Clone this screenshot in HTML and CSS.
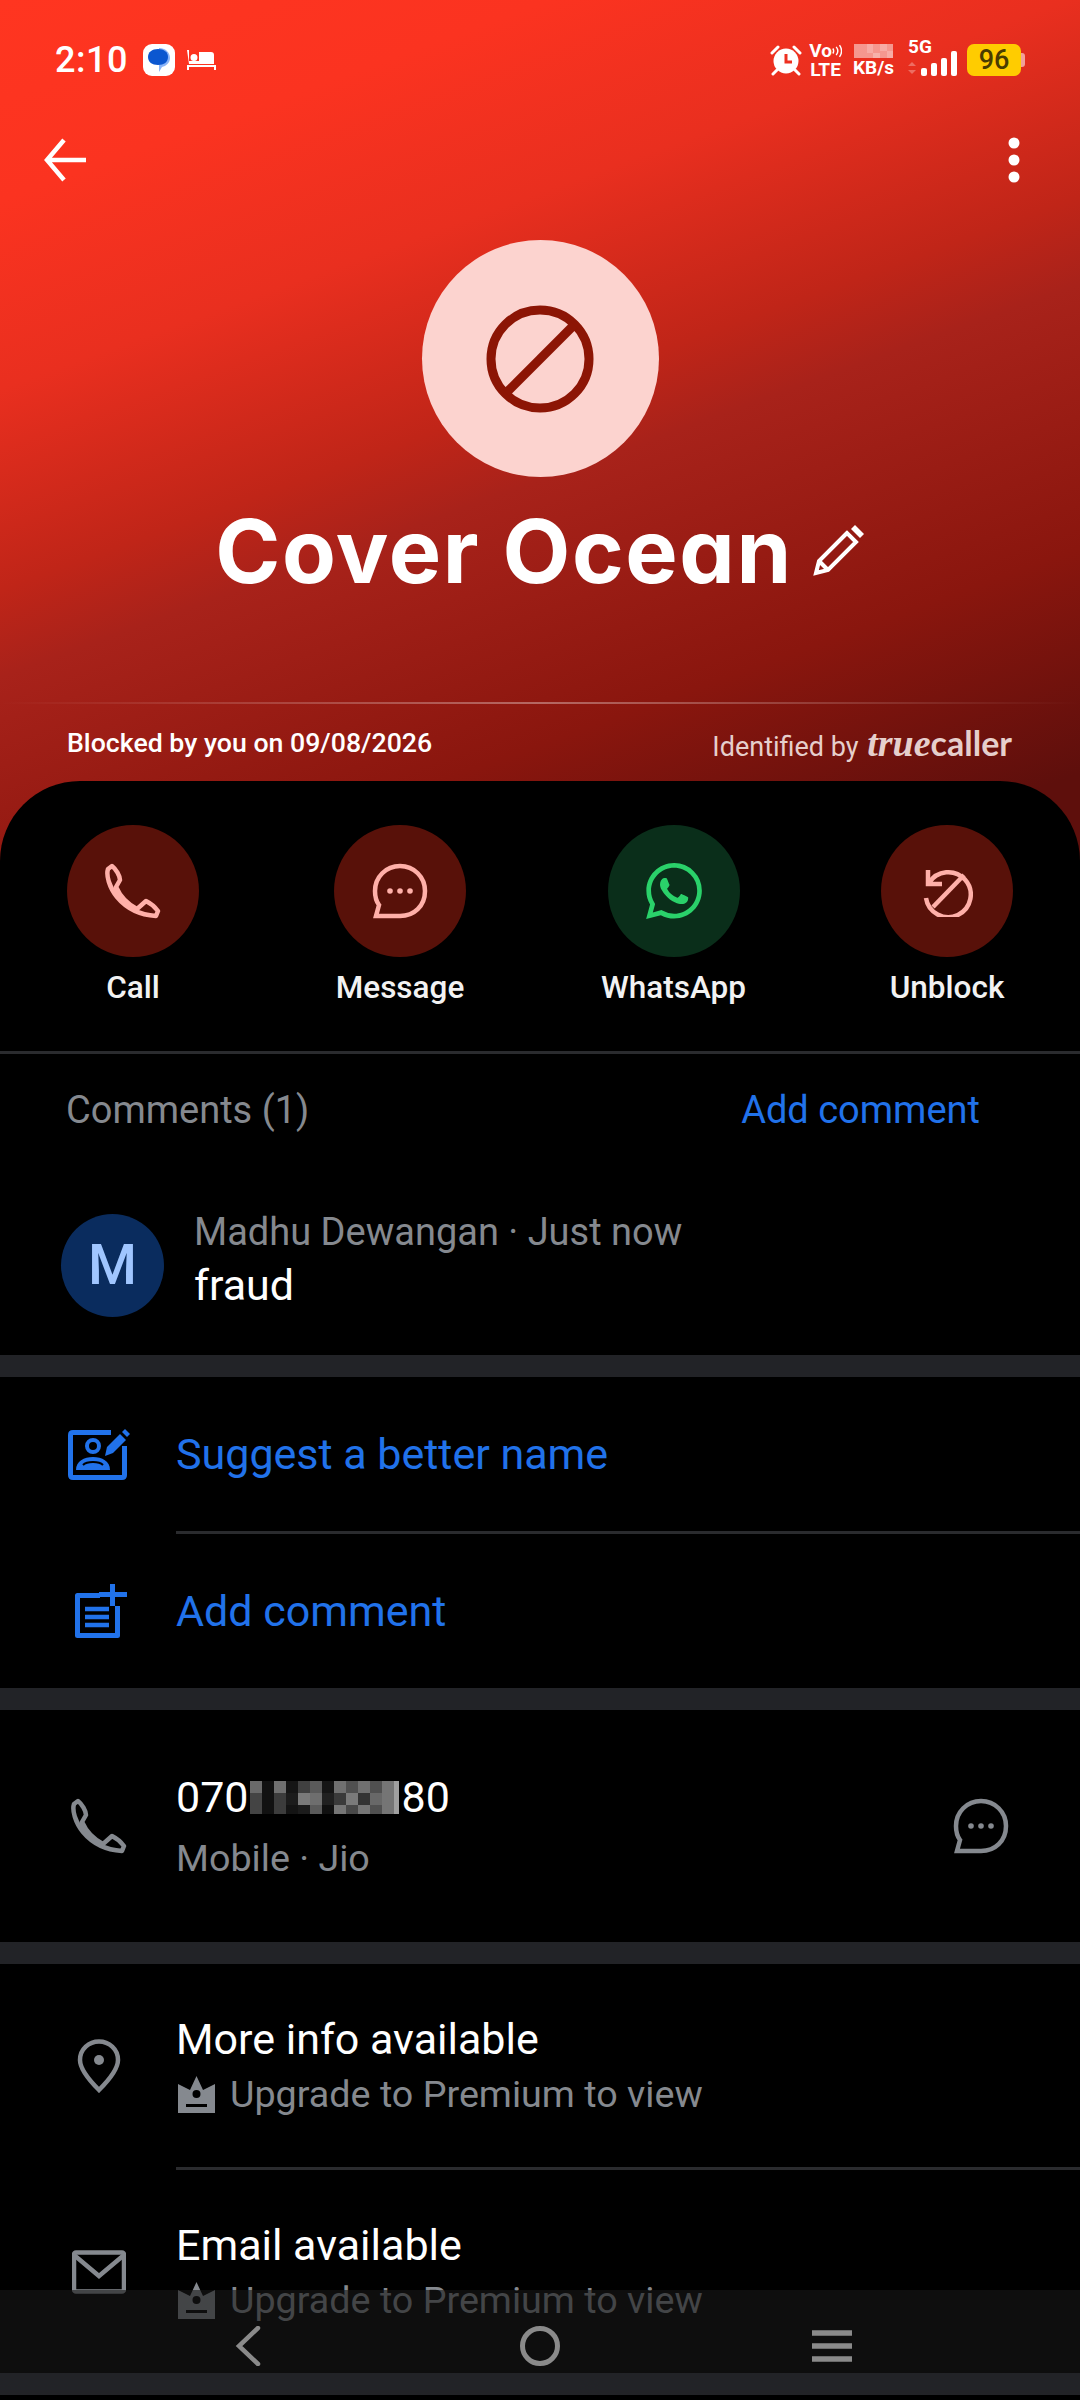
FILE: index.html

```html
<!DOCTYPE html>
<html lang="en">
<head>
  <meta charset="UTF-8" />
  <meta name="viewport" content="width=device-width, initial-scale=1.0"/>
  <title>Cover Ocean</title>
  <link rel="stylesheet" href="styles.css">
</head>
<body>
<div class="screen">

  <!-- Red header -->
  <header class="hero">
    <div class="status">
      <span class="time">2:10</span>
      <span class="app-badge">
        <svg width="22" height="24" viewBox="0 0 22 24"><path fill="#8ab4f8" d="M11 0c6 0 11 4 11 10 0 5-4 8-8 9l-3 5V0z"/><path fill="#0b57d0" d="M10 1C4 1 0 4 0 9s4 8 10 8c6 0 10-3 10-8s-4-8-10-8z"/></svg>
      </span>
      <svg class="bed" width="29" height="20" viewBox="0 0 29 20"><path fill="#fff" d="M0 0h2v14h25V5c0-2-1-3-3-3H12v9H2v3zM7 11a3.500 3.500 0 1 0 0-7 3.500 3.500 0 0 0 0 7zM0 15h29v5h-2v-3H2v3H0z"/></svg>

      <div class="status-right">
        <svg class="alarm" width="32" height="32" viewBox="0 0 32 32">
          <circle cx="16" cy="17" r="12.500" fill="#fff"/>
          <path d="M16 10v8h6" fill="none" stroke="#ee3020" stroke-width="3"/>
          <path d="M2 9l6-6M30 9l-6-6M7 26l-4 4M25 26l4 4" stroke="#fff" stroke-width="3" stroke-linecap="round"/>
        </svg>
        <div class="st-stack volte">
          <span class="vo">Vo<svg width="10" height="14" viewBox="0 0 12 14"><path d="M1 4q2 3 0 6M5 2q4 5 0 10M9 0q5 7 0 14" fill="none" stroke="#fff" stroke-width="1.700"/></svg></span>
          <span>LTE</span>
        </div>
        <div class="st-stack speed">
          <svg width="39" height="14" viewBox="0 0 39 14">
            <rect width="39" height="14" fill="#fff" fill-opacity=".5"/>
            <rect x="13" width="6" height="9" fill="#fff" fill-opacity=".2"/>
            <rect x="19" y="9" width="7" height="5" fill="#fff" fill-opacity=".25"/>
            <rect x="26" width="7" height="7" fill="#fff" fill-opacity=".2"/>
            <rect x="33" y="7" width="6" height="7" fill="#fff" fill-opacity=".2"/>
          </svg>
          <span>KB/s</span>
        </div>
        <div class="net">
          <span class="five-g">5G</span>
          <svg width="50" height="38" viewBox="0 0 50 38" class="bars">
            <path d="M4 21l4 4H0zM4 33l4-4H0z" fill="#fff" fill-opacity=".3"/>
            <rect x="13" y="27" width="6" height="8" rx="2" fill="#fff"/>
            <rect x="23" y="22" width="6" height="13" rx="2" fill="#fff"/>
            <rect x="33" y="17" width="6" height="18" rx="2" fill="#fff"/>
            <rect x="43" y="10" width="6" height="25" rx="2" fill="#fff"/>
          </svg>
        </div>
        <div class="battery">96</div>
        <div class="battery-nub"></div>
      </div>
    </div>

    <div class="toolbar">
      <svg width="44" height="44" viewBox="0 0 44 44"><path d="M42 22H4M20 2L3 22l17 20" fill="none" stroke="#fff" stroke-width="4.500"/></svg>
      <svg width="12" height="46" viewBox="0 0 12 46"><circle cx="6" cy="6" r="5.500" fill="#fff"/><circle cx="6" cy="23" r="5.500" fill="#fff"/><circle cx="6" cy="40" r="5.500" fill="#fff"/></svg>
    </div>

    <div class="avatar">
      <svg width="108" height="108" viewBox="0 0 108 108" class="block-icon">
        <circle cx="54" cy="54" r="49" fill="none" stroke="#8c1505" stroke-width="9"/>
        <path d="M88 20L20 88" stroke="#8c1505" stroke-width="9"/>
      </svg>
    </div>

    <div class="name-row">
      <h1>Cover Ocean</h1>
      <svg width="52" height="52" viewBox="0 0 52 52" class="pencil">
        <path d="M34 9L6 37l-3 12 12-3 28-28z" fill="none" stroke="#fff" stroke-width="4"/>
        <path d="M6 37l9 9" stroke="#fff" stroke-width="4"/>
        <path d="M38 5l4-4 9 9-4 4z" fill="#fff"/>
      </svg>
    </div>

    <div class="hero-line"></div>
    <div class="hero-meta">
      <span class="blocked">Blocked by you on 09/08/2026</span>
      <span class="identified">Identified by <span class="tc"><i>true</i>caller</span></span>
    </div>
  </header>

  <!-- Black sheet -->
  <main class="sheet">
    <div class="actions">
      <div class="action">
        <div class="circle">
          <svg width="56" height="56" viewBox="0 0 56 56" class="ico-red"><use href="#phone"/></svg>
        </div>
        <span>Call</span>
      </div>
      <div class="action">
        <div class="circle">
          <svg width="56" height="56" viewBox="0 0 56 56" class="ico-red"><use href="#bubble"/></svg>
        </div>
        <span>Message</span>
      </div>
      <div class="action">
        <div class="circle green">
          <svg width="56" height="56" viewBox="0 0 24 24"><path fill="#2ad16a" d="M17.472 14.382c-.297-.149-1.758-.867-2.03-.967-.273-.099-.471-.148-.67.15-.197.297-.767.966-.94 1.164-.173.199-.347.223-.644.075-.297-.15-1.255-.463-2.39-1.475-.883-.788-1.48-1.761-1.653-2.059-.173-.297-.018-.458.13-.606.134-.133.298-.347.446-.52.149-.174.198-.298.298-.497.099-.198.05-.371-.025-.52-.075-.149-.669-1.612-.916-2.207-.242-.579-.487-.5-.669-.51-.173-.008-.371-.01-.57-.01-.198 0-.52.074-.792.372-.272.297-1.04 1.016-1.04 2.479 0 1.462 1.065 2.875 1.213 3.074.149.198 2.096 3.2 5.077 4.487.709.306 1.262.489 1.694.625.712.227 1.36.195 1.871.118.571-.085 1.758-.719 2.006-1.413.248-.694.248-1.289.173-1.413-.074-.124-.272-.198-.57-.347m-5.421 7.403h-.004a9.87 9.87 0 01-5.031-1.378l-.361-.214-3.741.982.998-3.648-.235-.374a9.86 9.86 0 01-1.51-5.26c.001-5.45 4.436-9.884 9.888-9.884 2.64 0 5.122 1.03 6.988 2.898a9.825 9.825 0 012.893 6.994c-.003 5.45-4.437 9.884-9.885 9.884m8.413-18.297A11.815 11.815 0 0012.05 0C5.495 0 .16 5.335.157 11.892c0 2.096.547 4.142 1.588 5.945L.057 24l6.305-1.654a11.882 11.882 0 005.683 1.448h.005c6.554 0 11.89-5.335 11.893-11.893a11.821 11.821 0 00-3.48-8.413z"/></svg>
        </div>
        <span>WhatsApp</span>
      </div>
      <div class="action">
        <div class="circle">
          <svg width="52" height="52" viewBox="0 0 52 52" fill="none" stroke="#ffb0a9" stroke-width="4.500">
            <path d="M7 5v14h14"/>
            <path d="M8 18A22.500 22.500 0 1 1 5 33"/>
            <path d="M43 10L12 42"/>
          </svg>
        </div>
        <span>Unblock</span>
      </div>
    </div>

    <div class="comments-head">
      <span class="muted">Comments (1)</span>
      <span class="blue">Add comment</span>
    </div>

    <div class="comment">
      <div class="comment-avatar">M</div>
      <div>
        <div class="comment-by">Madhu Dewangan · Just now</div>
        <div class="comment-text">fraud</div>
      </div>
    </div>

    <div class="gap"></div>

    <div class="row">
      <div class="row-icon">
        <svg width="62" height="52" viewBox="0 0 62 52">
          <path d="M43 4.500H5Q2.500 4.500 2.500 7v40q0 2.500 2.500 2.500h49q2.500 0 2.500-2.500V18" fill="none" stroke="#2172ea" stroke-width="5"/>
          <circle cx="25" cy="18" r="6" fill="none" stroke="#2172ea" stroke-width="4"/>
          <path d="M8 42c0-9 8-13 17-13s17 4 17 13z" fill="#2172ea"/>
          <path d="M15 37c4-4 16-4 20 0" fill="none" stroke="#000" stroke-width="2"/>
          <path d="M37 28l2-9L52 6l6 6-13 13z" fill="#2172ea"/>
          <path d="M54 4l3-3 5 5-3 3z" fill="#2172ea"/>
        </svg>
      </div>
      <span class="row-title blue">Suggest a better name</span>
    </div>
    <div class="inset-line"></div>
    <div class="row">
      <div class="row-icon">
        <svg width="56" height="54" viewBox="-3 0 56 54">
          <path d="M26 11.500H3.500v40h40V22" fill="none" stroke="#2172ea" stroke-width="5" stroke-linejoin="round"/>
          <path d="M38.500 0v22M25 10.500h28" stroke="#2172ea" stroke-width="5" fill="none"/>
          <path d="M11 25h24M11 33h24M11 41h24" stroke="#2172ea" stroke-width="4.500"/>
        </svg>
      </div>
      <span class="row-title blue">Add comment</span>
    </div>

    <div class="gap"></div>

    <div class="row row-phone">
      <div class="row-icon">
        <svg width="56" height="56" viewBox="0 0 56 56" class="ico-grey"><use href="#phone"/></svg>
      </div>
      <div class="row-text">
        <div class="row-title number">070<svg class="redact" width="149" height="33" viewBox="0 0 149 33">
          <path fill="#6a6a6a" d="M0 0h12v12H0z"/><path fill="#111" d="M12 0h12v33H12z"/><path fill="#707070" d="M24 0h12v12H24z"/><path fill="#151515" d="M36 0h12v12H36z"/><path fill="#404040" d="M48 0h12v12H48z"/><path fill="#5a5a5a" d="M60 0h12v12H60z"/><path fill="#151515" d="M72 0h12v12H72z"/><path fill="#707070" d="M84 0h12v12H84z"/><path fill="#505050" d="M96 0h12v12H96z"/><path fill="#707070" d="M108 0h12v12h-12z"/><path fill="#505050" d="M120 0h12v12h-12z"/><path fill="#757575" d="M132 0h12v33h-12z"/><path fill="#a0a0a0" d="M144 0h5v33h-5z"/>
          <path fill="#444" d="M0 12h12v21H0z"/><path fill="#3c3c3c" d="M24 12h12v21H24z"/><path fill="#1c1c1c" d="M36 12h12v12H36z"/><path fill="#7a7a7a" d="M48 12h12v12H48z"/><path fill="#6e6e6e" d="M60 12h12v12H60z"/><path fill="#202020" d="M72 12h12v12H72z"/><path fill="#3a3a3a" d="M84 12h12v12H84z"/><path fill="#7a7a7a" d="M96 12h12v12H96z"/><path fill="#333" d="M108 12h12v12h-12z"/><path fill="#686868" d="M120 12h12v12h-12z"/>
          <path fill="#141414" d="M36 24h12v9H36z"/><path fill="#1c1c1c" d="M48 24h12v9H48z"/><path fill="#5a5a5a" d="M60 24h12v9H60z"/><path fill="#101010" d="M72 24h12v9H72z"/><path fill="#757575" d="M84 24h12v9H84z"/><path fill="#484848" d="M96 24h12v9H96z"/><path fill="#757575" d="M108 24h12v9h-12z"/><path fill="#505050" d="M120 24h12v9h-12z"/>
        </svg>80</div>
        <div class="row-sub">Mobile · Jio</div>
      </div>
      <svg width="56" height="56" viewBox="0 0 56 56" class="ico-grey row-end"><use href="#bubble"/></svg>
    </div>

    <div class="gap"></div>

    <div class="row row-info">
      <div class="row-icon">
        <svg width="44" height="54" viewBox="0 0 44 54">
          <path d="M22 2.500c10 0 19 7.500 19 18.500 0 10-11 22-19 30C14 43 3 31 3 21 3 10 12 2.500 22 2.500z" fill="none" stroke="#85898f" stroke-width="4.500"/>
          <circle cx="22" cy="21" r="5" fill="#85898f"/>
        </svg>
      </div>
      <div class="row-text">
        <div class="row-title">More info available</div>
        <div class="row-sub premium"><svg width="37" height="37" viewBox="0 0 37 37"><use href="#crown"/></svg>Upgrade to Premium to view</div>
      </div>
    </div>
    <div class="inset-line"></div>
    <div class="row row-info">
      <div class="row-icon">
        <svg width="54" height="44" viewBox="0 0 54 44">
          <rect x="2" y="2.500" width="50" height="39" rx="2" fill="none" stroke="#85898f" stroke-width="4.500"/>
          <path d="M2 5l25 21L52 5" fill="none" stroke="#85898f" stroke-width="4.500"/>
        </svg>
      </div>
      <div class="row-text">
        <div class="row-title">Email available</div>
        <div class="row-sub premium"><svg width="37" height="37" viewBox="0 0 37 37"><use href="#crown"/></svg>Upgrade to Premium to view</div>
      </div>
    </div>

    <div class="gap"></div>
  </main>

  <!-- Navigation bar, sits over the list -->
  <nav class="navbar">
    <svg width="26" height="40" viewBox="0 0 26 40"><path d="M23 2L4 20l19 18" fill="none" stroke="#8a8a8a" stroke-width="4.500" stroke-linecap="round"/></svg>
    <div class="nav-home"></div>
    <svg width="40" height="32" viewBox="0 0 40 32"><path d="M0 3h40M0 16h40M0 29h40" stroke="#8a8a8a" stroke-width="5.500"/></svg>
  </nav>

  <!-- shared icons -->
  <svg class="defs" width="0" height="0">
    <defs>
      <g id="phone"><path d="M7 3c4 3 8 10 8 14l-4 7c4 9 11 17 21 22l9-8c4 2 9 6 12 10l-2 5C36 52 22 46 12 34 4 24 1 12 3 6z" fill="none" stroke="currentColor" stroke-width="4.500" stroke-linejoin="round"/></g>
      <g id="bubble">
        <path d="M28 3c14 0 25 11 25 25 0 15-11 25-25 25H4l3-11c-3-4-4-9-4-14C3 14 14 3 28 3z" fill="none" stroke="currentColor" stroke-width="4.500"/>
        <circle cx="18" cy="28" r="2.800" fill="currentColor"/><circle cx="28" cy="28" r="2.800" fill="currentColor"/><circle cx="38" cy="28" r="2.800" fill="currentColor"/>
      </g>
      <g id="crown">
        <path d="M18.500 0L25 14l12-6v29H0V8l12 6z" fill="#85898f"/>
        <circle cx="18.500" cy="18" r="4" fill="#000"/>
        <path d="M8 28h21v3H8z" fill="#000"/>
      </g>
    </defs>
  </svg>
</div>
</body>
</html>
```

FILE: styles.css

```css
* {
  box-sizing: border-box;
}
html, body {
  margin: 0;
  padding: 0;
  background: #000;
}
.screen {
  position: relative;
  width: 1080px;
  height: 2400px;
  overflow: hidden;
  background: #000;
  font-family: Roboto, 'Noto Sans', sans-serif;
  color: #fff;
}

/* header */
.hero {
  height: 861px;
  background: linear-gradient(160deg, #ff3520 0%, #fb3320 16%, #e92f1f 31%, #c02518 47%, #a8221a 54%, #8a160e 75%, #5e0f0c 93%);
}
.status {
  display: flex;
  align-items: center;
  height: 120px;
  padding: 0 55px;
}
.time {
  font-size: 36px;
  font-weight: 500;
  letter-spacing: 0.5px;
}
.app-badge {
  display: flex;
  align-items: center;
  justify-content: center;
  width: 32px;
  height: 32px;
  margin-left: 15px;
  background: #fff;
  border-radius: 9px;
}
.bed {
  margin-left: 12px;
}
.status-right {
  display: flex;
  align-items: center;
  margin-left: auto;
}
.st-stack {
  display: flex;
  flex-direction: column;
  align-items: center;
  font-size: 19px;
  font-weight: 700;
  line-height: 19px;
}
.vo {
  display: flex;
  align-items: center;
  height: 19px;
}
.volte {
  width: 27px;
  margin-left: 10px;
}
.speed {
  width: 39px;
  margin-left: 15px;
}
.net {
  position: relative;
  width: 50px;
  height: 38px;
  margin-left: 15px;
}
.five-g {
  position: absolute;
  top: -6px;
  left: 0;
  font-size: 19px;
  font-weight: 700;
}
.battery {
  width: 54px;
  height: 32px;
  margin-left: 9px;
  background: #ffcc00;
  border-radius: 7px;
  color: #4a3c00;
  font-size: 27px;
  font-weight: 500;
  line-height: 32px;
  text-align: center;
}
.battery-nub {
  width: 4px;
  height: 14px;
  background: rgba(255, 255, 255, 0.55);
  border-radius: 0 3px 3px 0;
}
.toolbar {
  display: flex;
  align-items: center;
  justify-content: space-between;
  height: 80px;
  padding: 0 60px 0 44px;
}
.avatar {
  display: flex;
  align-items: center;
  justify-content: center;
  width: 237px;
  height: 237px;
  margin: 40px auto 0;
  background: #fcd3cf;
  border-radius: 50%;
}
.block-icon {
  filter: blur(0.6px);
}
.name-row {
  display: flex;
  align-items: center;
  justify-content: center;
  height: 100px;
  margin-top: 24px;
}
h1 {
  margin: 0;
  font-family: Inter, sans-serif;
  font-feature-settings: "cv11";
  font-size: 88px;
  font-weight: 700;
  letter-spacing: 1.6px;
  line-height: 100px;
}
.pencil {
  margin: 0 0 3px 20px;
}
.hero-line {
  height: 2px;
  margin-top: 101px;
  background: linear-gradient(90deg, transparent, rgba(255, 255, 255, 0.35) 50%, transparent);
}
.hero-meta {
  display: flex;
  align-items: center;
  justify-content: space-between;
  height: 78px;
  padding: 0 68px 0 67px;
}
.blocked {
  font-size: 26.7px;
  font-weight: 500;
}
.identified {
  color: #e6cfcc;
  font-size: 27px;
  font-weight: 400;
}
.tc {
  margin-left: 2px;
  font-family: Lato, sans-serif;
  font-size: 34px;
  font-weight: 700;
}
.tc i {
  font-family: 'Liberation Serif', serif;
  font-size: 38px;
  font-weight: 700;
}

/* sheet */
.sheet {
  margin-top: -80px;
  position: relative;
  background: #000;
  border-radius: 80px 80px 0 0;
}
.actions {
  display: flex;
  justify-content: space-between;
  padding: 44px 67px 43px;
  border-bottom: 3px solid #2a2b2e;
}
.action {
  display: flex;
  flex-direction: column;
  align-items: center;
  min-width: 132px;
  font-size: 31.5px;
  font-weight: 500;
  color: #f2f2f2;
}
.action span {
  margin-top: 11px;
  line-height: 40px;
}
.circle {
  display: flex;
  align-items: center;
  justify-content: center;
  width: 132px;
  height: 132px;
  background: #581109;
  border-radius: 50%;
}
.circle.green {
  background: #0a2e1a;
}
.ico-red {
  color: #ffb0a9;
}
.ico-grey {
  color: #85898f;
}
.muted {
  color: #85898f;
}
.blue {
  color: #2172ea;
}
.comments-head {
  display: flex;
  align-items: center;
  justify-content: space-between;
  height: 112px;
  padding: 0 100px 0 66px;
  font-size: 38px;
}
.comment {
  display: flex;
  height: 189px;
  padding: 44px 0 0 61px;
}
.comment-avatar {
  width: 103px;
  height: 103px;
  margin: 4px 30px 0 0;
  background: #0a2c5e;
  border-radius: 50%;
  color: #a0c6ff;
  font-size: 56px;
  font-weight: 500;
  line-height: 103px;
  text-align: center;
}
.comment-by {
  color: #85898f;
  font-size: 38px;
  line-height: 44px;
}
.comment-text {
  margin-top: 6px;
  font-size: 43px;
  line-height: 50px;
}
.gap {
  height: 22px;
  background: #222327;
}
.row {
  display: flex;
  align-items: center;
  height: 154px;
}
.row-icon {
  display: flex;
  align-items: center;
  justify-content: center;
  flex: none;
  width: 62px;
  margin: 0 46px 0 68px;
}
.row-text {
  padding-top: 3px;
}
.row-title {
  font-size: 43px;
  line-height: 61px;
}
.row-sub {
  color: #85898f;
  font-size: 37.7px;
  line-height: 61px;
}
.row-phone {
  height: 232px;
}
.row-info {
  height: 203px;
}
.row-info .row-title,
.row-info .row-sub {
  line-height: 55px;
}
.row-end {
  margin: 0 71px 0 auto;
}
.number {
  display: flex;
  align-items: center;
}
.redact {
  margin: 0 3px 0 1px;
}
.premium {
  display: flex;
  align-items: center;
}
.premium svg {
  margin: 0 15px 0 2px;
}
.inset-line {
  height: 3px;
  margin-left: 176px;
  background: #2a2b2e;
}

/* nav */
.navbar {
  position: absolute;
  left: 0;
  right: 0;
  bottom: 27px;
  display: grid;
  grid-template-columns: repeat(3, 1fr);
  justify-items: center;
  align-items: center;
  height: 83px;
  padding: 28px 102px 0;
  background: rgba(24, 24, 24, 0.6);
}
.nav-home {
  width: 40px;
  height: 40px;
  border: 5px solid #8a8a8a;
  border-radius: 50%;
}
.defs {
  position: absolute;
}
```
